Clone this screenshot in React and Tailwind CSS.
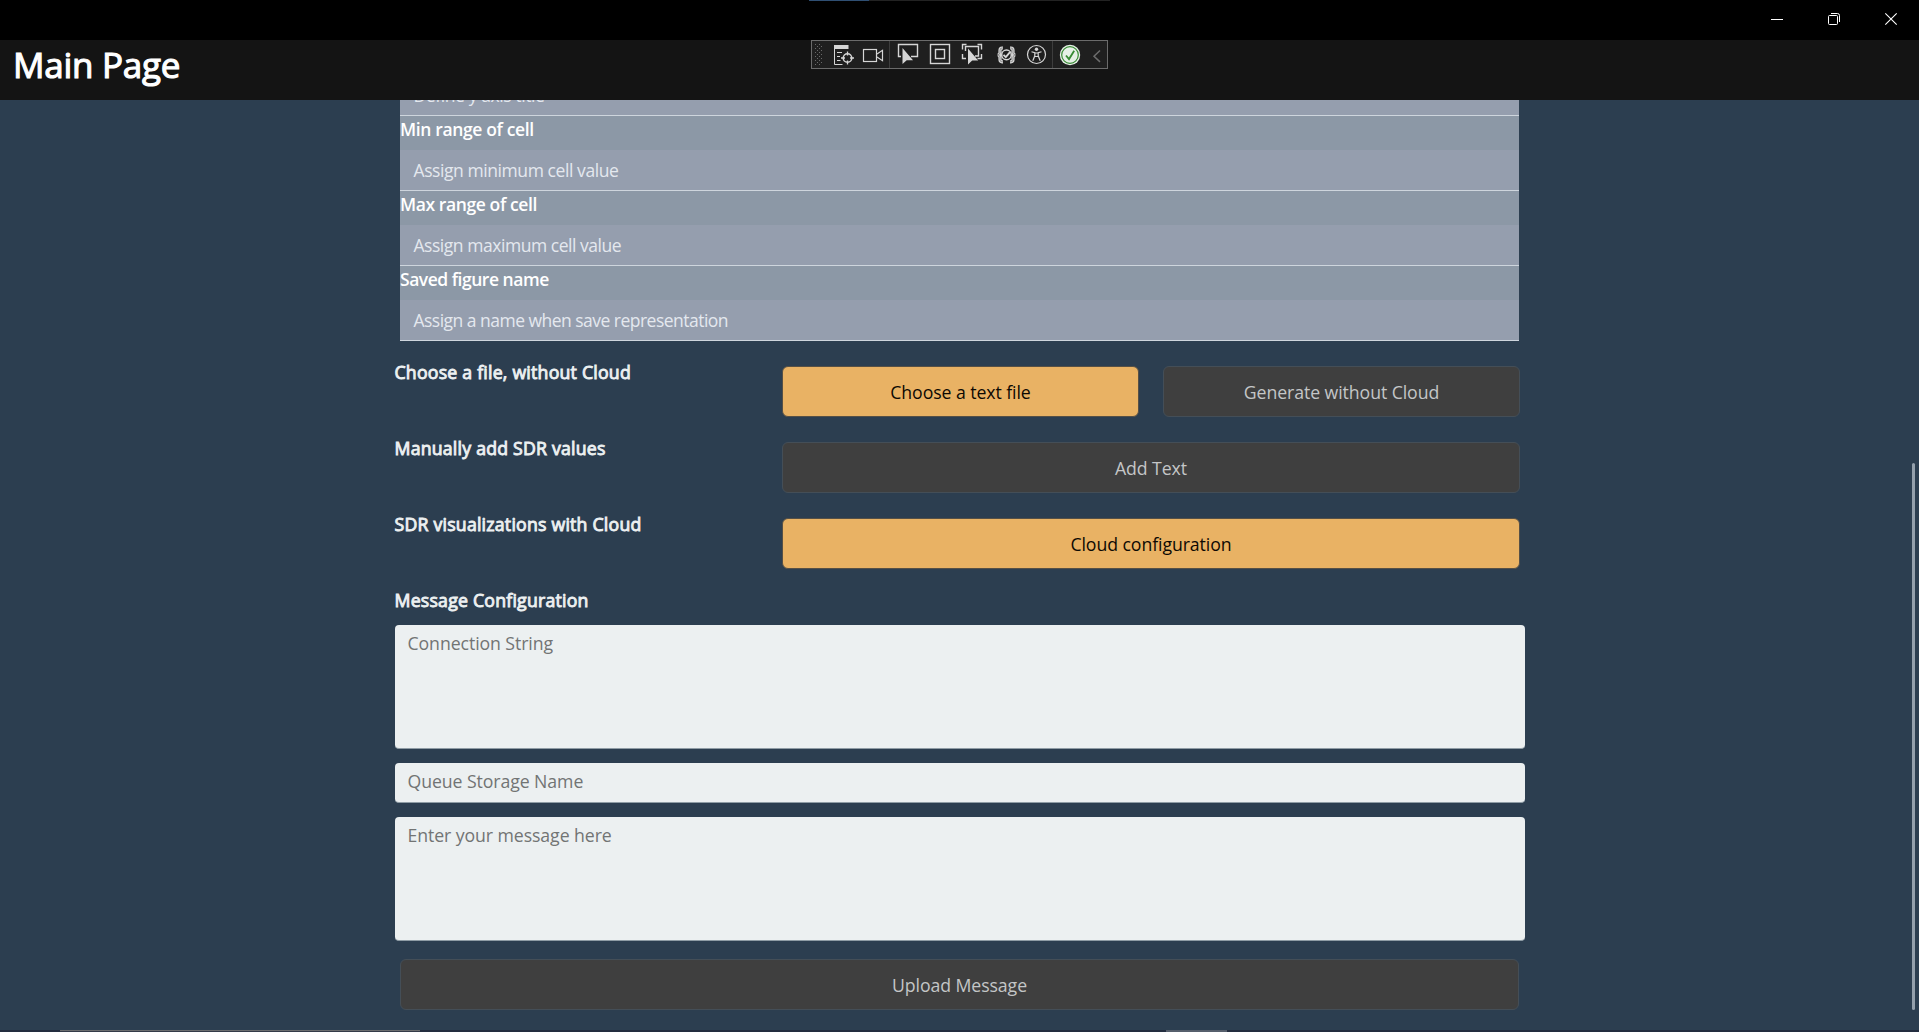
const parameters = [
  {
    label: "Min range of cell",
    labelClass: "tracking-[-0.36px]",
    placeholder: "Assign minimum cell value",
    placeholderClass: "tracking-[-0.42px]",
  },
  {
    label: "Max range of cell",
    labelClass: "tracking-[-0.4px]",
    placeholder: "Assign maximum cell value",
    placeholderClass: "tracking-[-0.46px]",
  },
  {
    label: "Saved figure name",
    labelClass: "tracking-[-0.48px]",
    placeholder: "Assign a name when save representation",
    placeholderClass: "tracking-[-0.52px]",
  },
];

function WindowControls() {
  return (
    <div className="flex text-white">
      <svg className="h-10 w-[57px]" viewBox="1748 0 57 40" fill="none" stroke="currentColor">
        <path d="M1771 19.5h12" />
      </svg>
      <svg className="h-10 w-[57px]" viewBox="1805 0 57 40" fill="none" stroke="currentColor">
        <rect x="1828.5" y="15.5" width="9" height="9" rx="1" />
        <path d="M1831 13.5h6.5a2 2 0 0 1 2 2v6.5" />
      </svg>
      <svg className="h-10 w-[57px]" viewBox="1862 0 57 40" fill="none" stroke="currentColor" strokeWidth="1.1">
        <path d="M1885.3 13.3l11.4 11.4M1896.7 13.3l-11.4 11.4" />
      </svg>
    </div>
  );
}

function DebugToolbar() {
  const dots = [];
  for (let r = 0; r < 11; r++) {
    for (let c = 0; c < 4; c++) {
      if ((r + c) % 2 === 0) dots.push([815 + c * 2, 44 + r * 2]);
    }
  }
  return (
    <div className="absolute left-[811px] top-10 flex h-[29px] w-[297px] border border-[#6b6b6b] bg-[#1f1f1f] text-[#d6d6d6]">
      <svg className="h-[27px] w-4" viewBox="812 41 16 27">
        {dots.map(([x, y]) => (
          <rect key={`${x}-${y}`} x={x} y={y} width="1" height="1" fill="#6a6a6a" />
        ))}
      </svg>
      <svg className="h-[27px] w-[30px]" viewBox="828 41 30 27" fill="none" stroke="currentColor">
        <path d="M834 45h14.5v4H834z" fill="currentColor" stroke="none" />
        <path d="M834.5 49v15.500h8M837 52.500h5M837 56.500h3M837 60.500h3.500" />
        <circle cx="847.500" cy="58" r="4.300" strokeWidth="1.500" />
        <path d="M847.500 51.500v4M847.500 60.500v4M841 58h4M850 58h4" strokeWidth="1.300" />
      </svg>
      <svg className="h-[27px] w-[31px]" viewBox="858 41 31 27" fill="none" stroke="currentColor" strokeWidth="1.200">
        <rect x="863.500" y="49.500" width="13" height="12" />
        <path d="M877 54l5.500-3.700v10.400L877 57" />
      </svg>
      <div className="w-px bg-[#3d3d3d]" />
      <svg className="h-[27px] w-[34px]" viewBox="890 41 34 27" fill="none" stroke="currentColor" strokeWidth="1.400">
        <path d="M901 56.500h-2.500v-12h19v12H911" />
        <path d="M902.500 48v16l4.200-3.800h6.300z" fill="currentColor" stroke="none" />
      </svg>
      <svg className="h-[27px] w-8" viewBox="924 41 32 27" fill="none" stroke="currentColor" strokeWidth="1.400">
        <rect x="930.500" y="44.500" width="19" height="19" />
        <rect x="935.500" y="49.500" width="9" height="9" />
      </svg>
      <svg className="h-[27px] w-[33px]" viewBox="956 41 33 27" fill="none" stroke="currentColor" strokeWidth="1.400">
        <path d="M962.500 49.500v-5h4M977.500 44.500h4v5M981.500 54v4.500h-4M962.500 54v4.500h3.500" />
        <path d="M965.500 51v-4.500h13v9.500h-3.500" />
        <path d="M968 48.500v16l4.200-4h6z" fill="currentColor" stroke="none" />
      </svg>
      <svg className="h-[27px] w-[33px]" viewBox="989 41 33 27" fill="none" stroke="currentColor" strokeWidth="1.500">
        <path d="M1003 48h-1q-2 0-2 2.200v2.200q0 2.200-2.200 2.500q2.200.3 2.200 2.500v2.200q0 2.200 2 2.200h1M1010 48h1q2 0 2 2.200v2.200q0 2.200 2.200 2.500q-2.200.3-2.200 2.500v2.200q0 2.200-2 2.200h-1" strokeWidth="3.200" />
        <path d="M1003 48h-1q-2 0-2 2.200v2.200q0 2.200-2.200 2.500q2.200.3 2.200 2.500v2.200q0 2.200 2 2.200h1M1010 48h1q2 0 2 2.200v2.200q0 2.200 2.200 2.500q-2.200.3-2.200 2.500v2.200q0 2.200-2 2.200h-1" stroke="#666666" strokeWidth="0.600" />
        <circle cx="1006.500" cy="54.900" r="4.800" strokeWidth="1.500" fill="#1f1f1f" />
        <path d="M1003.500 54.900l2.300 2.300 4.200-5" strokeWidth="1.900" />
      </svg>
      <svg className="h-[27px] w-[30px]" viewBox="1022 41 30 27" fill="none" stroke="currentColor" strokeWidth="1.200">
        <circle cx="1036.500" cy="54.500" r="9" />
        <circle cx="1036.500" cy="49.300" r="1.700" fill="currentColor" stroke="none" />
        <path d="M1031.500 51.700l3.300 1.100v3l-2 5M1041.500 51.700l-3.300 1.100v3l2 5M1034.800 53h3.400M1034.800 56.500h3.400" />
      </svg>
      <div className="w-px bg-[#3d3d3d]" />
      <svg className="h-[27px] w-[33px]" viewBox="1053 41 33 27" fill="none">
        <circle cx="1070" cy="55" r="10.200" fill="#e6f0e6" />
        <circle cx="1070" cy="55" r="8.300" stroke="#388a34" strokeWidth="1.200" />
        <path d="M1066 55.500l3 3.600 5.200-8.300" stroke="#388a34" strokeWidth="1.800" />
      </svg>
      <svg className="h-[27px] w-[21px]" viewBox="1086 41 21 27" fill="none" stroke="#6c6c6c" strokeWidth="1.500">
        <path d="M1100 50.500l-6 5.700 6 5.700" />
      </svg>
    </div>
  );
}

function Entry({ children, className }) {
  return (
    <div className="h-[41px] border-b border-[#ced5dd] bg-[#959eae] pl-[13.5px] pt-2">
      <p className={`text-[17.5px] leading-6 text-[#e4e8ee] ${className}`}>{children}</p>
    </div>
  );
}

function SectionLabel({ children, className }) {
  return (
    <h2 className={`-ml-[0.5px] h-6 text-[17.7px] font-normal leading-6 tracking-[0.22px] text-[#ecf0f1] [-webkit-text-stroke:0.9px_#ecf0f1] ${className}`}>
      {children}
    </h2>
  );
}

function Button({ children, primary, className }) {
  const tone = primary
    ? "border-[#565046] bg-[#e9b264] text-[#0d0903]"
    : "border-[#444e57] bg-[#3f3f3f] text-[#c4c6c7]";
  return (
    <button className={`h-[51px] rounded-[6px] border text-[17.7px] leading-6 tracking-[-0.08px] ${tone} ${className}`}>
      {children}
    </button>
  );
}

function Editor({ children, className }) {
  return (
    <div className={`rounded-[4px] border-b border-[#8f9ca5] bg-[#ecf0f1] pl-[12.5px] pt-[6px] text-[17.7px] leading-6 tracking-[-0.08px] text-[#727474] ${className}`}>
      {children}
    </div>
  );
}

export default function App() {
  return (
    <div className="relative flex h-[1032px] w-[1919px] flex-col overflow-hidden bg-[#2c3e50] font-['Open_Sans',sans-serif]">
      <div className="flex h-10 shrink-0 justify-end bg-black">
        <WindowControls />
      </div>
      <header className="h-[60px] shrink-0 bg-[#141414] pl-[13px]">
        <h1 className="pt-[5px] text-[35px] font-normal leading-10 tracking-[-0.25px] text-white [-webkit-text-stroke:1.1px_white]">
          Main Page
        </h1>
      </header>

      <main className="flex h-[930px] shrink-0 justify-between overflow-hidden">
        <div className="ml-[395px] w-[1130px]">
          <section className="-mt-[25px] ml-[5px] w-[1119px]">
            <Entry className="tracking-[-0.4px]">Define y axis title</Entry>
            {parameters.map((p) => (
              <div key={p.label}>
                <div className="h-[34px] bg-[#8c98a6] pt-px">
                  <h2 className={`text-[17.5px] font-semibold leading-6 text-white ${p.labelClass}`}>{p.label}</h2>
                </div>
                <Entry className={p.placeholderClass}>{p.placeholder}</Entry>
              </div>
            ))}
          </section>

          <section className="mt-[25px] grid w-[1125px] grid-cols-[387px_738px] gap-y-[25px]">
            <SectionLabel className="-mt-[6px]">Choose a file, without Cloud</SectionLabel>
            <div className="grid grid-cols-2 gap-6">
              <Button primary>Choose a text file</Button>
              <Button>Generate without Cloud</Button>
            </div>
            <SectionLabel className="-mt-[6px]">Manually add SDR values</SectionLabel>
            <Button>Add Text</Button>
            <SectionLabel className="-mt-[6px]">SDR visualizations with Cloud</SectionLabel>
            <Button primary>Cloud configuration</Button>
          </section>

          <section className="mt-[19px]">
            <SectionLabel>Message Configuration</SectionLabel>
            <div className="mt-[13px] flex flex-col gap-[14px]">
              <Editor className="h-[124px]">Connection String</Editor>
              <Editor className="h-10">Queue Storage Name</Editor>
              <Editor className="h-[124px]">Enter your message here</Editor>
            </div>
            <Button className="ml-[5px] mt-[18px] w-[1119px]">Upload Message</Button>
          </section>
        </div>
        <div className="mr-1 mt-[363px] h-[547px] w-[3px] rounded-full bg-[#94a0ac]" />
      </main>

      <footer className="flex h-[2px] shrink-0 bg-[#232d3f]">
        <div className="ml-[60px] w-[360px] border-t border-[#6a6c6e] bg-[#343b48]" />
        <div className="ml-[746px] w-[61px] bg-[#565f6c]" />
      </footer>

      <div className="absolute left-[809px] top-0 flex h-px w-[301px] bg-[#222222]">
        <div className="w-[60px] bg-[#2f4f73]" />
      </div>
      <DebugToolbar />
    </div>
  );
}
